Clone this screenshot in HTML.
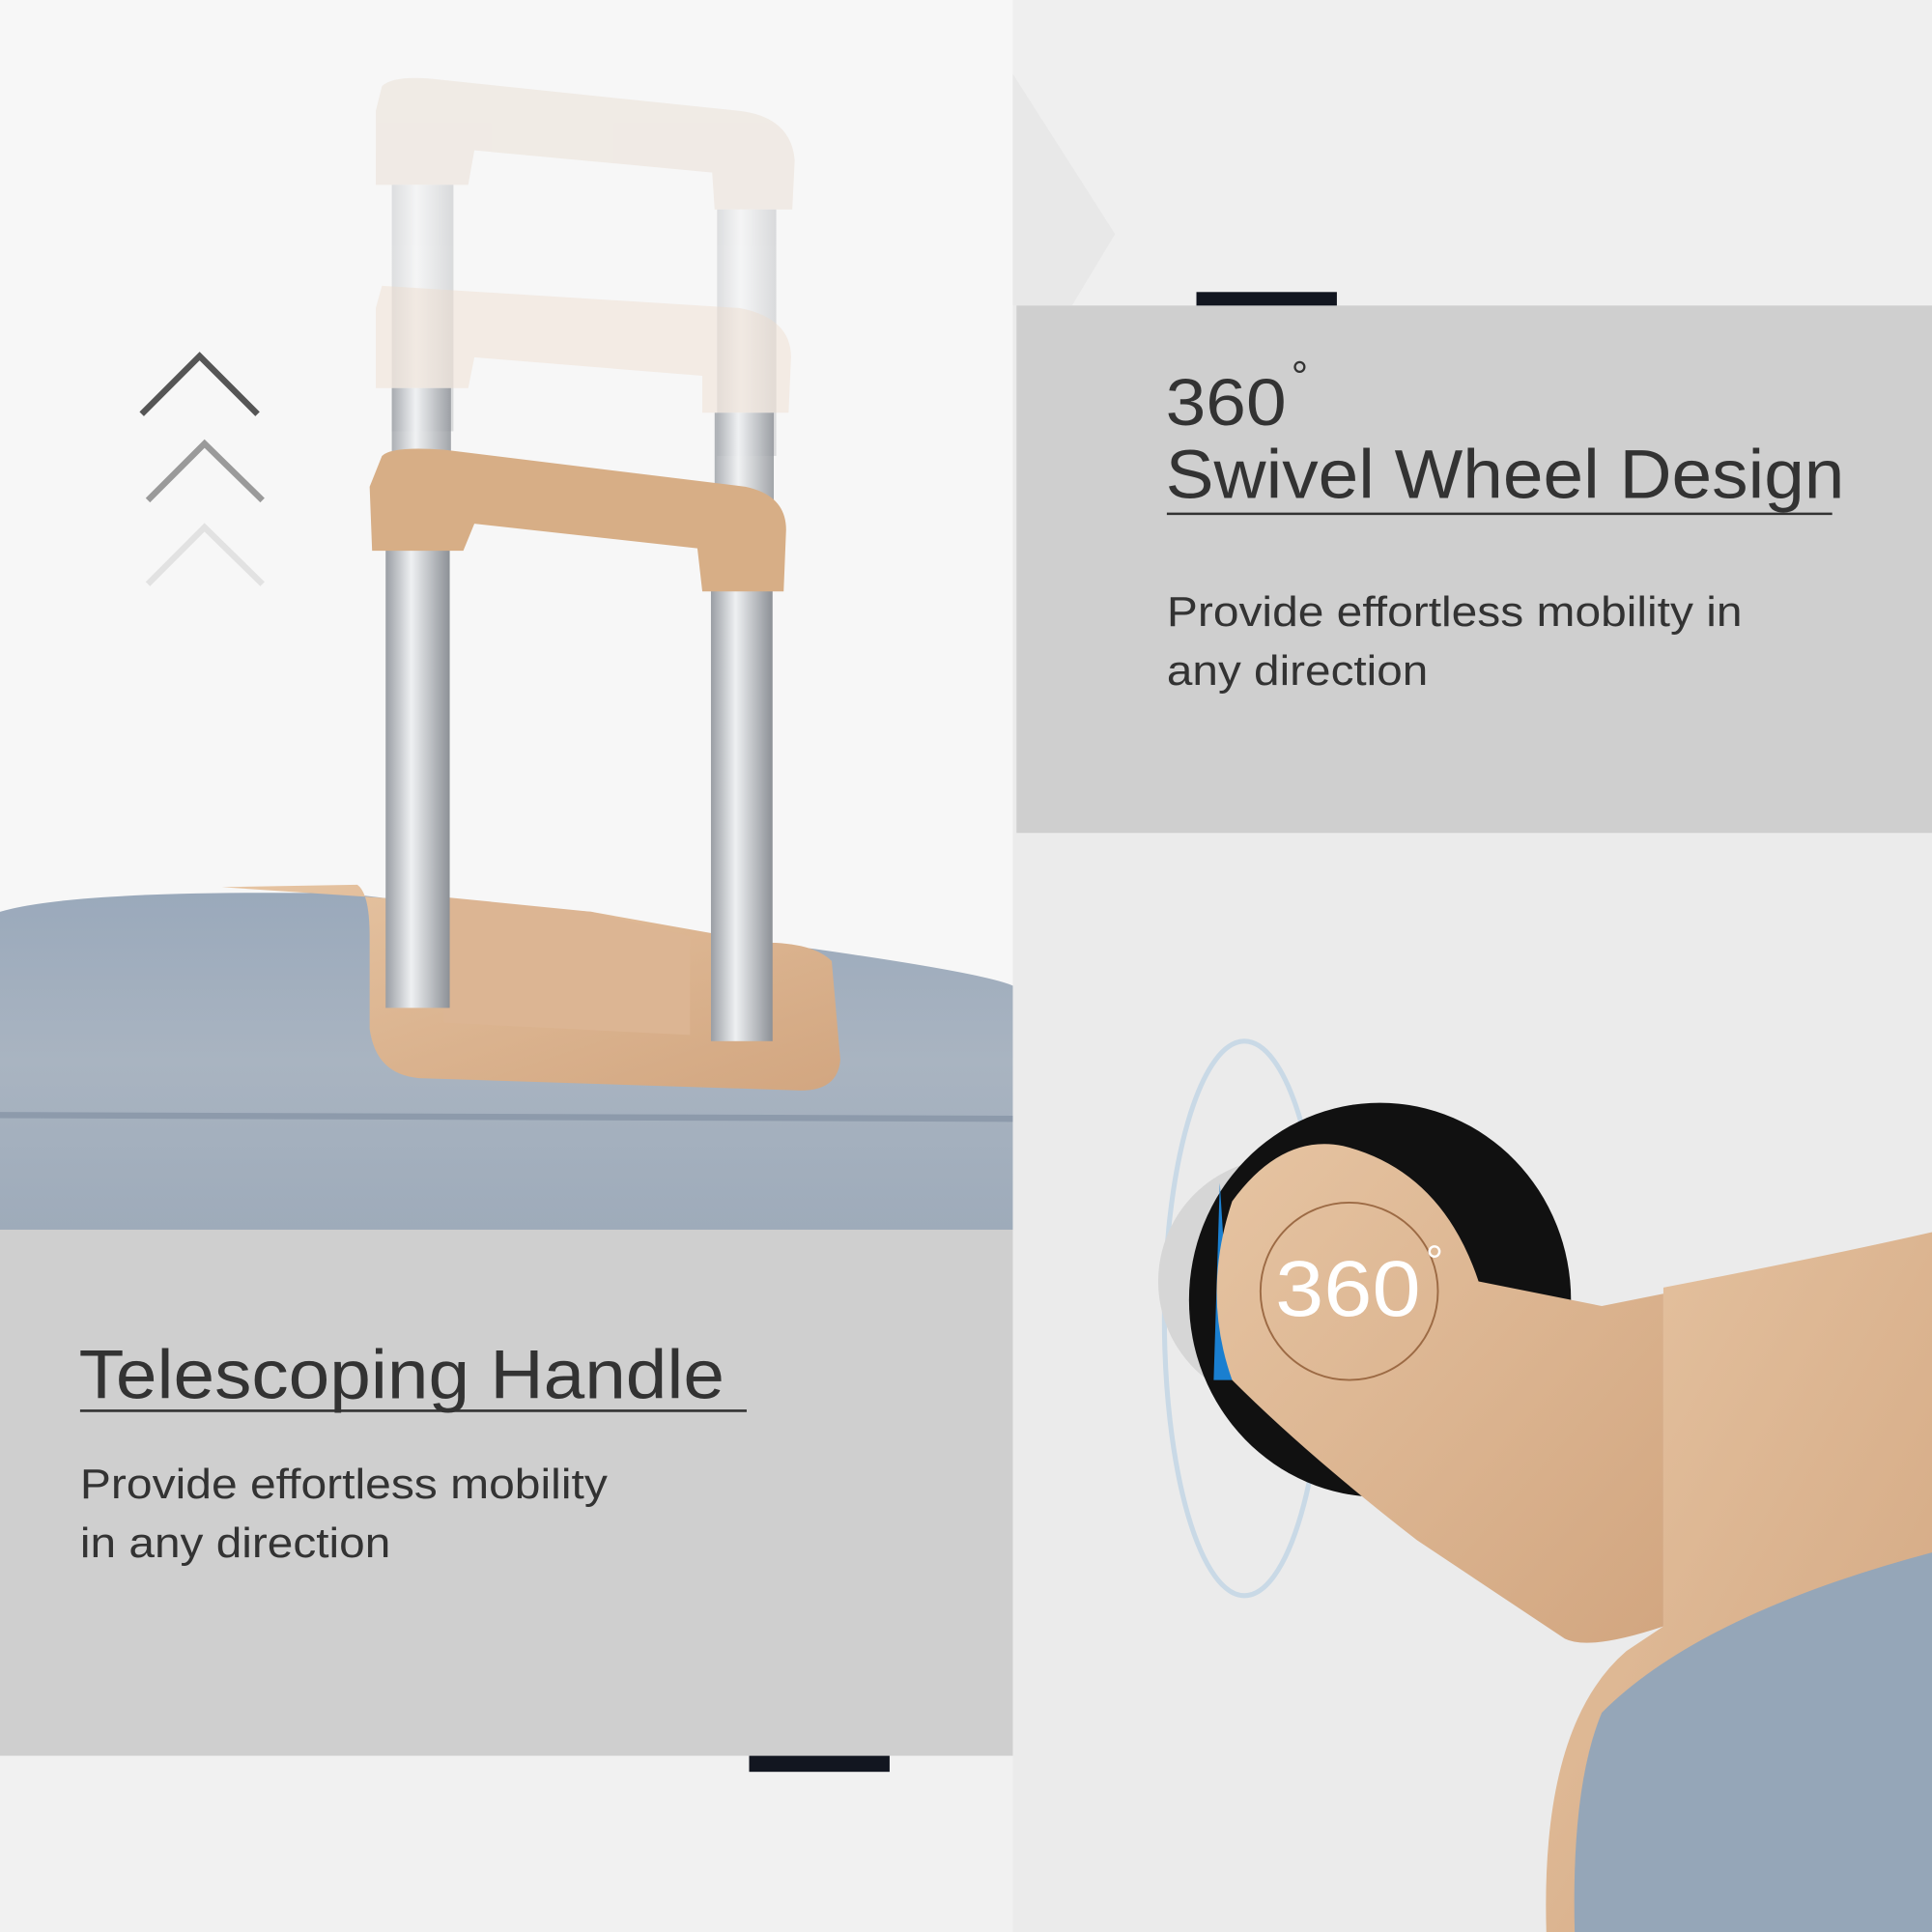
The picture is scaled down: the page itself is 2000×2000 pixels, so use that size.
<!DOCTYPE html>
<html><head><style>html,body{margin:0;padding:0;background:#f5f5f5}svg{display:block}</style></head>
<body>
<svg width="2000" height="2000" viewBox="0 0 1568 1568" xmlns="http://www.w3.org/2000/svg" font-family="Liberation Sans, sans-serif">
<defs>
<linearGradient id="pole" x1="0" x2="1"><stop offset="0" stop-color="#9a9ea4"/><stop offset=".4" stop-color="#eef0f2"/><stop offset="1" stop-color="#8c9096"/></linearGradient>
<linearGradient id="body" x1="0" y1="0" x2="0" y2="1"><stop offset="0" stop-color="#9aa9bb"/><stop offset=".5" stop-color="#a9b4c1"/><stop offset="1" stop-color="#9eabba"/></linearGradient>
<linearGradient id="tan" x1="0" y1="0" x2="1" y2="1"><stop offset="0" stop-color="#e6c4a2"/><stop offset="1" stop-color="#d2a680"/></linearGradient>
</defs>
<rect width="1568" height="1568" fill="#ebebeb"/>
<rect x="0" y="0" width="822" height="998" fill="#f7f7f7"/>
<rect x="822" y="0" width="746" height="248" fill="#efefef"/>
<polygon points="822,60 905,190 870,248 822,248" fill="#e8e8e8"/>
<polyline points="115,336 162,289 209,336" fill="none" stroke="#555" stroke-width="5"/>
<polyline points="120,406 166,360 213,406" fill="none" stroke="#9a9a9a" stroke-width="5"/>
<polyline points="120,474 166,428 213,474" fill="none" stroke="#e2e2e2" stroke-width="5"/>
<path d="M0,740 Q60,722 280,725 L660,770 Q800,790 822,800 L822,998 L0,998 Z" fill="url(#body)"/>
<line x1="0" y1="905" x2="822" y2="908" stroke="#8d9aab" stroke-width="5"/>
<path d="M180,720 L290,718 Q300,725 300,760 L300,835 Q305,872 340,875 L650,885 Q680,885 682,860 L675,780 Q660,765 620,765 L480,740 Z" fill="url(#tan)"/>
<path d="M360,728 L480,740 L560,760 L560,840 L360,830 Z" fill="#dcb593"/>
<g opacity=".28">
<path d="M310,70 Q320,60 360,65 L600,90 Q642,95 645,130 L643,170 L580,170 L578,140 L385,122 L380,150 L305,150 L305,90 Z" fill="#e0cbb7"/>
<rect x="318" y="150" width="50" height="200" fill="url(#pole)"/>
<rect x="582" y="170" width="48" height="200" fill="url(#pole)"/>
</g>
<g opacity=".45">
<path d="M310,232 L600,250 Q642,258 642,290 L640,335 L570,335 L570,305 L385,290 L380,315 L305,315 L305,250 Z" fill="#eddccc"/>
</g>
<rect x="313" y="440" width="52" height="378" fill="url(#pole)"/>
<rect x="577" y="475" width="50" height="370" fill="url(#pole)"/>
<rect x="318" y="315" width="48" height="130" fill="url(#pole)" opacity=".8"/>
<rect x="580" y="335" width="48" height="140" fill="url(#pole)" opacity=".8"/>
<path d="M310,370 Q318,362 360,365 L605,395 Q638,402 638,430 L636,480 L570,480 L566,445 L385,425 L376,447 L302,447 L300,395 Z" fill="#d7ae86"/>
<rect x="0" y="998" width="822" height="427" fill="#cfcfcf"/>
<rect x="0" y="1425" width="822" height="143" fill="#f1f1f1"/>
<rect x="608" y="1425" width="114" height="13" fill="#121620"/>
<text x="64" y="1135" font-size="56" fill="#333" textLength="524" lengthAdjust="spacingAndGlyphs">Telescoping Handle</text>
<line x1="65" y1="1145" x2="606" y2="1145" stroke="#333" stroke-width="2"/>
<text x="65" y="1216" font-size="34" fill="#333" textLength="428" lengthAdjust="spacingAndGlyphs">Provide effortless mobility</text>
<text x="65" y="1264" font-size="34" fill="#333" textLength="252" lengthAdjust="spacingAndGlyphs">in any direction</text>
<rect x="825" y="248" width="743" height="428" fill="#cfcfcf"/>
<rect x="971" y="237" width="114" height="11" fill="#121620"/>
<text x="946" y="345" font-size="54" fill="#333"><tspan textLength="98" lengthAdjust="spacingAndGlyphs">360</tspan><tspan font-size="34" dy="-28" dx="4">°</tspan></text>
<text x="946" y="404" font-size="56" fill="#333" textLength="551" lengthAdjust="spacingAndGlyphs">Swivel Wheel Design</text>
<line x1="947" y1="417" x2="1487" y2="417" stroke="#333" stroke-width="2"/>
<text x="947" y="508" font-size="34" fill="#333" textLength="467" lengthAdjust="spacingAndGlyphs">Provide effortless mobility in</text>
<text x="947" y="556" font-size="34" fill="#333" textLength="212" lengthAdjust="spacingAndGlyphs">any direction</text>
<ellipse cx="1010" cy="1070" rx="65" ry="225" fill="none" stroke="#c9d9e6" stroke-width="4"/>
<circle cx="1040" cy="1040" r="100" fill="#d6d6d6"/>
<ellipse cx="1120" cy="1055" rx="155" ry="160" fill="#111"/>
<path d="M990,960 L985,1120 L1000,1120 Z" fill="#1a7fd0"/>
<path d="M1000,975 Q1040,920 1090,930 Q1170,950 1200,1040 L1300,1060 L1350,1050 L1350,1320 Q1290,1340 1270,1330 L1150,1250 Q1060,1180 1000,1120 Q975,1050 1000,975 Z" fill="url(#tan)"/>
<ellipse cx="1095" cy="1048" rx="72" ry="72" fill="none" stroke="#9c6a44" stroke-width="1.5"/>
<text x="1035" y="1068" font-size="64" fill="#fff"><tspan textLength="118" lengthAdjust="spacingAndGlyphs">360</tspan><tspan font-size="36" dy="-32" dx="4">°</tspan></text>
<path d="M1350,1045 Q1480,1020 1568,1000 L1568,1568 L1255,1568 Q1250,1400 1320,1340 L1350,1320 Z" fill="url(#tan)"/>
<path d="M1300,1390 Q1380,1310 1568,1260 L1568,1568 L1278,1568 Q1275,1450 1300,1390 Z" fill="#95a6b8"/>
</svg>
</body></html>
